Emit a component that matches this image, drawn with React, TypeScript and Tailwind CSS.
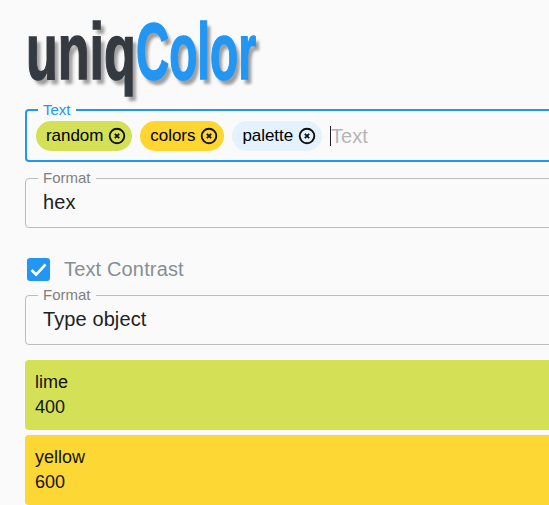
import React from 'react';

const chips = [
  { label: 'random', bg: 'bg-[#d4e157]' },
  { label: 'colors', bg: 'bg-[#ffd530]' },
  { label: 'palette', bg: 'bg-[#e3f2fd]' },
];

const DeleteIcon = () => (
  <svg width="18" height="18" viewBox="0 0 18 18" fill="none" stroke="#111" className="shrink-0">
    <circle cx="9" cy="9" r="7.3" strokeWidth="1.9" />
    <path d="M6.8 6.8l4.4 4.4M11.2 6.8l-4.4 4.4" strokeWidth="1.8" />
  </svg>
);

const Chip = ({ label, bg }: { label: string; bg: string }) => (
  <div className={`flex h-[30px] items-center gap-[5px] rounded-[15px] pl-[10px] pr-[6px] text-[17px] tracking-[-0.05px] text-black ${bg}`}>
    <span>{label}</span>
    <DeleteIcon />
  </div>
);

const SelectField = ({ value }: { value: string }) => (
  <div className="relative h-[50px] rounded border border-[#bdbdbd] pl-[17px] pt-[9px] text-[20px] leading-[28px] tracking-[0.1px] text-[#212121]">
    <span className="absolute -top-[10px] left-[12px] bg-[#fafafa] px-[5px] text-[15px] leading-[17px] tracking-normal text-[#808080]">Format</span>
    {value}
  </div>
);

const ColorCard = ({ name, shade, bg }: { name: string; shade: string; bg: string }) => (
  <div className={`h-[70px] rounded pl-[10px] pt-[10px] text-[18px] leading-[25px] text-[#111] ${bg}`}>
    <div>{name}</div>
    <div>{shade}</div>
  </div>
);

export default function App() {
  return (
    <div className="h-[505px] w-[549px] overflow-hidden bg-[#fafafa] font-['Liberation_Sans',Arial,sans-serif]">
      <div className="w-[640px] pl-[25px]">
        <div className="flex h-[109px] pl-[1px] pt-[6px] text-[80px] font-bold leading-[92px] [-webkit-text-stroke:1.5px_currentColor] [text-shadow:6px_5px_4px_#9e9e9e]">
          <span className="inline-block w-[110px] origin-left scale-x-[0.65] text-[#343a40]">uniq</span>
          <span className="inline-block w-[121px] origin-left scale-x-[0.575] text-[#2196f3]">Color</span>
        </div>

        <div className="relative flex h-[53px] items-center gap-2 rounded border-2 border-[#2196f3] pl-[9px]">
          <span className="absolute -top-[10px] left-[11px] bg-[#fafafa] px-[5px] text-[15px] leading-[17px] text-[#2196f3]">Text</span>
          {chips.map((c) => (
            <Chip key={c.label} label={c.label} bg={c.bg} />
          ))}
          <div className="h-[20px] w-px bg-[#212121]" />
          <span className="-ml-2 text-[20px] text-[#b5b5b5]">Text</span>
        </div>

        <div className="mt-4">
          <SelectField value="hex" />
        </div>

        <div className="mt-[29px] flex h-6 items-center gap-[14px] pl-[2px]">
          <div className="flex h-[23px] w-[23px] items-center justify-center rounded-[3px] bg-[#2196f3]">
            <svg width="17" height="17" viewBox="0 0 17 17" fill="none" stroke="#fff" strokeWidth="2.6">
              <path d="M1.5 9l4.6 4.6L15.5 3.5" />
            </svg>
          </div>
          <span className="text-[20px] tracking-[0.15px] text-[#868e96]">Text Contrast</span>
        </div>

        <div className="mt-[14px]">
          <SelectField value="Type object" />
        </div>

        <div className="mt-[15px] flex flex-col gap-[5px]">
          <ColorCard name="lime" shade="400" bg="bg-[#d4e157]" />
          <ColorCard name="yellow" shade="600" bg="bg-[#fdd835]" />
        </div>
      </div>
    </div>
  );
}
